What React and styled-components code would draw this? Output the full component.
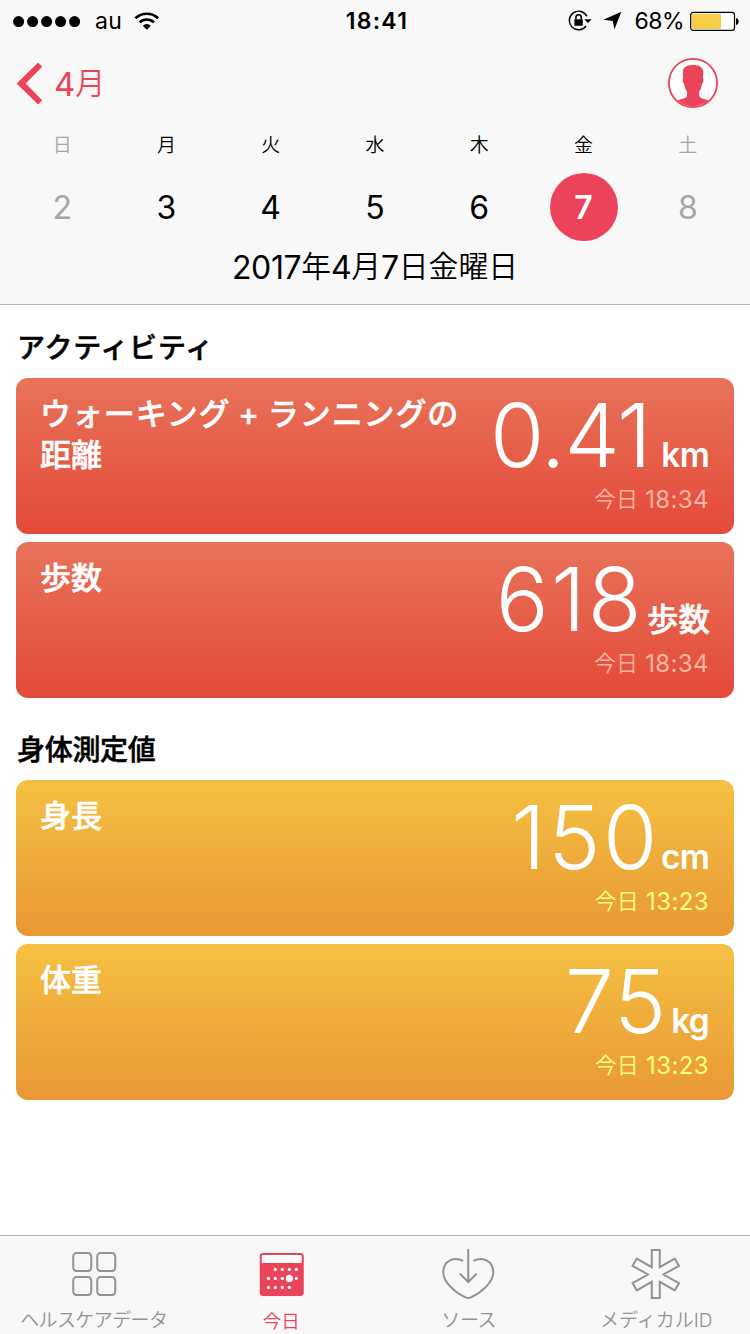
import React from "react";
import styled, { createGlobalStyle } from "styled-components";

const RED = "#eb445a";
const GREY = "#929292";

const GlobalStyle = createGlobalStyle`
  * { box-sizing: border-box; }
  html, body { margin: 0; padding: 0; background: #fff; }
  body {
    font-family: Inter, "Noto Sans CJK JP", sans-serif;
    color: #000;
  }
`;

const Screen = styled.div`
  width: 750px;
  height: 1334px;
  display: flex;
  flex-direction: column;
  background: #fff;
  overflow: hidden;
`;

const Kanji = styled.span`
  font-family: "Noto Sans CJK JP", sans-serif;
  font-weight: 350;
  font-size: ${(p) => p.$size}px;
  letter-spacing: 0;
  line-height: 1;
  vertical-align: ${(p) => p.$raise || 1}px;
`;

/* header */
const Header = styled.header`
  height: 305px;
  background: #f8f8f8;
  border-bottom: 1px solid #b2b2b2;
`;

const StatusBar = styled.div`
  height: 40px;
  padding: 0 11px 0 13px;
  display: grid;
  grid-template-columns: 1fr auto 1fr;
  align-items: center;
  font-size: 23px;
`;

const StatusSide = styled.div`
  display: flex;
  align-items: center;
  justify-content: ${(p) => (p.$end ? "flex-end" : "flex-start")};
  height: 40px;
`;

const StatusText = styled.span`
  padding-top: 1px;
  line-height: 40px;
`;

const Carrier = styled(StatusText)`
  margin: 0 12px 0 14px;
  letter-spacing: 0.3px;
`;

const Clock = styled(StatusText)`
  padding-left: 2px;
  font-weight: 600;
  letter-spacing: 1.3px;
`;

const Percent = styled(StatusText)`
  margin: 0 6px 0 12px;
  letter-spacing: -0.5px;
`;

const NavBar = styled.nav`
  height: 86px;
  padding: 0 32px 0 16px;
  display: flex;
  align-items: center;
  justify-content: space-between;
`;

const BackButton = styled.button`
  display: flex;
  align-items: center;
  gap: 11px;
  padding: 0;
  border: 0;
  background: none;
  color: ${RED};
  font-family: inherit;
  font-size: 33px;
`;

const BackLabel = styled.span`
  padding-top: 2px;
  line-height: 44px;
`;

const WeekRow = styled.div`
  display: grid;
  grid-template-columns: repeat(7, 1fr);
  justify-items: center;
  align-items: center;
  padding: 0 10px;
`;

const Weekday = styled.span`
  font-family: "Noto Sans CJK JP", sans-serif;
  font-size: 19px;
  font-weight: 350;
  line-height: 36px;
  color: ${(p) => (p.$dim ? "#a6a6a6" : "#000")};
`;

const Day = styled.span`
  width: 68px;
  height: 68px;
  margin-top: 11px;
  border-radius: 50%;
  text-align: center;
  line-height: 69px;
  font-size: 32px;
  font-weight: ${(p) => (p.$selected ? 600 : 400)};
  background: ${(p) => (p.$selected ? RED : "transparent")};
  color: ${(p) => (p.$selected ? "#fff" : p.$dim ? "#a6a6a6" : "#000")};
`;

const FullDate = styled.div`
  margin-top: 7px;
  text-align: center;
  font-size: 32px;
  line-height: 40px;
  letter-spacing: -0.4px;
`;

/* content */
const Content = styled.main`
  flex: 1;
  padding: 0 16px;
`;

const Section = styled.section`
  padding-top: ${(p) => p.$top}px;
`;

const SectionTitle = styled.h2`
  margin: 0 0 12px;
  padding-left: 1px;
  height: 40px;
  font-family: "Noto Sans CJK JP", sans-serif;
  font-size: 28px;
  line-height: 40px;
  font-weight: 500;
  -webkit-text-stroke: 0.5px currentColor;
  letter-spacing: ${(p) => p.$spacing}px;
`;

const tones = {
  red: { top: "#e87259", bottom: "#e44a38", time: "#ffb5a3" },
  yellow: { top: "#f5c042", bottom: "#e89835", time: "#ffff80" },
};

const Card = styled.article`
  height: 156px;
  margin-bottom: 8px;
  padding: 17px 25px 0 24px;
  border-radius: 12px;
  display: flex;
  justify-content: space-between;
  color: #fff;
  background: linear-gradient(${(p) => tones[p.$tone].top}, ${(p) => tones[p.$tone].bottom});
`;

const CardTitle = styled.h3`
  margin: -3px 0 0;
  font-family: "Noto Sans CJK JP", sans-serif;
  font-size: 31px;
  line-height: 40px;
  font-weight: 500;
  -webkit-text-stroke: 0.5px currentColor;
`;

const TitleLine = styled.div`
  height: 41px;
  letter-spacing: ${(p) => p.$spacing || 0}px;
`;

const Plus = styled.span`
  font-family: Inter, sans-serif;
  line-height: 1;
`;

const Reading = styled.div`
  display: flex;
  flex-direction: column;
  align-items: flex-end;
`;

const Value = styled.div`
  display: flex;
  align-items: baseline;
  gap: ${(p) => p.$gap}px;
  height: 80px;
  line-height: 80px;
`;

const Digits = styled.span`
  font-size: 88px;
  font-weight: 300;
  letter-spacing: ${(p) => p.$spacing}px;
`;

const LatinUnit = styled.span`
  font-size: 33.5px;
  font-weight: 600;
  letter-spacing: -0.8px;
`;

const KanjiUnit = styled.span`
  margin-right: -1px;
  font-size: 31.5px;
  font-weight: 500;
  -webkit-text-stroke: 0.5px currentColor;
`;

const Time = styled.div`
  margin-top: 5px;
  font-size: 24px;
  line-height: 40px;
  letter-spacing: 0.4px;
  color: ${(p) => tones[p.$tone].time};
`;

/* tab bar */
const TabBar = styled.footer`
  height: 99px;
  display: grid;
  grid-template-columns: repeat(4, 1fr);
  background: #f8f8f8;
  border-top: 1px solid #b2b2b2;
`;

const Tab = styled.button`
  display: flex;
  flex-direction: column;
  align-items: center;
  padding: 10px 0 0;
  border: 0;
  background: none;
  color: ${(p) => (p.$active ? RED : GREY)};
`;

const TabLabel = styled.span`
  margin-top: 7px;
  font-family: Inter, "Noto Sans CJK JP", sans-serif;
  font-size: ${(p) => p.$size || 19}px;
  font-weight: 350;
  line-height: 28px;
  letter-spacing: ${(p) => p.$spacing || 0}px;
  white-space: nowrap;
`;

const SignalDots = () => (
  <svg width="68" height="12" viewBox="0 -0.6 68 12">
    {[5.6, 19.6, 33.6, 47.6, 61.6].map((x) => (
      <circle key={x} cx={x} cy="6" r="5.5" />
    ))}
  </svg>
);

const WifiIcon = () => (
  <svg width="26" height="18" viewBox="0 0 26 18" fill="none" stroke="#000" strokeWidth="2.6">
    <path d="M1.4 6.3a16.4 16.4 0 0 1 22.8 0" />
    <path d="M5.6 10.4a10.5 10.5 0 0 1 14.4 0" />
    <path d="M12.8 17.8l-4-4.1a5.8 5.8 0 0 1 8 0z" fill="#000" stroke="none" />
  </svg>
);

const RotationLockIcon = () => (
  <svg width="24" height="22" viewBox="-0.5 0.8 24 22" fill="none" stroke="#000">
    <path d="M18.5 7.2A9.3 9.3 0 1 0 17.6 16.8" strokeWidth="1.4" />
    <path d="M15.8 10h7.4l-3.7 3.8z" fill="#000" stroke="none" />
    <rect x="5.9" y="10" width="8.4" height="6.6" rx="0.6" fill="#000" stroke="none" />
    <path d="M7.4 10.4V8.2a2.7 2.7 0 0 1 5.4 0V10.4" strokeWidth="1.5" />
  </svg>
);

const LocationIcon = () => (
  <svg width="30" height="19" viewBox="-11 -0.5 30 19">
    <path d="M18.3 0.2L11.4 17.9 9.8 9.4 0.4 8.2z" />
  </svg>
);

const BatteryIcon = () => (
  <svg width="49" height="20" viewBox="0 0 49 20">
    <rect x="0.7" y="1.4" width="43.8" height="18" rx="2.6" fill="#fff" stroke="#000" strokeWidth="1.2" />
    <rect x="2" y="2.8" width="29" height="15.2" rx="0.8" fill="#f7ce46" />
    <path d="M46 7c3.6.6 3.6 6.4 0 7z" />
  </svg>
);

const ChevronIcon = () => (
  <svg width="27" height="43" viewBox="0 -0.5 27 43" fill={RED}>
    <path d="M22.2 0.1L26.2 4.2 9.6 21 26.2 37.8 22.2 42 0.6 21z" />
  </svg>
);

const ProfileIcon = () => (
  <svg width="50" height="50" viewBox="0 0 50 50">
    <circle cx="25" cy="25" r="24.1" fill="#fff" stroke={RED} strokeWidth="1.8" />
    <path
      fill={RED}
      d="M25 7C31 7 34.6 9 35.3 13.4L35 20.2C35.9 21 35.5 24.6 34.2 25.5 33.6 29 32.6 31.6 31.1 33.8L31.3 38.3C32.6 40.6 37 41 40.5 42.6A24 24 0 0 1 9.5 42.6C13 41 17.6 40.6 18.9 38.3L19.1 33.8C17.4 31.6 16.6 29 16 25.5 14.6 24.6 14.2 21 15.1 20.2L14.8 13C15.6 9 19 7 25 7Z"
    />
  </svg>
);

const GridIcon = () => (
  <svg width="54" height="54" viewBox="-0.25 0 54 54" fill="none" stroke={GREY} strokeWidth="2">
    {[6, 30].map((y) =>
      [6, 30].map((x) => <rect key={`${x}-${y}`} x={x} y={y + 1} width="18" height="18" rx="3.4" />)
    )}
  </svg>
);

const dots = [
  [20.6, 23.4], [27.6, 23.4], [34.6, 23.4], [41.6, 23.4],
  [13.6, 32.4], [20.6, 32.4], [27.6, 32.4], [41.6, 32.4],
  [13.6, 41.4], [20.6, 41.4], [27.6, 41.4], [34.6, 41.4],
];

const CalendarIcon = () => (
  <svg width="54" height="54" viewBox="-0.75 0 54 54">
    <rect x="5" y="7" width="44" height="43" rx="3.4" fill={RED} />
    <path d="M7 17V10.4Q7 9 8.4 9H45.6Q47 9 47 10.4V17Z" fill="#fff" />
    {dots.map(([x, y]) => (
      <circle key={`${x}-${y}`} cx={x} cy={y} r="1.6" fill="#fff" />
    ))}
    <circle cx="34.6" cy="32.4" r="3.6" fill="#fff" />
  </svg>
);

const HeartIcon = () => (
  <svg width="54" height="54" viewBox="0.75 0 54 54" fill="none" stroke={GREY} strokeWidth="2">
    <path d="M21.8 14.8C13.8 11 2 13.6 2 26.2 2 36.4 14 46.6 24.4 51.4Q27 52.6 29.6 51.4C40 46.6 52 36.4 52 26.2 52 13.6 40.2 11 32.2 14.8" />
    <path d="M27 3V35.4M18.6 27.6L27 36l8.4-8.4" />
  </svg>
);

const AsteriskIcon = () => (
  <svg width="54" height="54" viewBox="0.25 0 54 54" fill="none" stroke={GREY} strokeWidth="2">
    <path d="M23 4h8v17.2l15-8.6 4.2 7.3L34.8 28.5l15.4 8.6-4.2 7.3-15-8.6V52h-8V35.8l-15 8.6-4.2-7.3L19.2 28.5 3.8 19.9 8 12.6l15 8.6z" />
  </svg>
);

const week = [
  ["日", 2, true], ["月", 3], ["火", 4], ["水", 5], ["木", 6], ["金", 7], ["土", 8, true],
];

function Measurement({ tone, title, value, unit, cjkUnit, time, gap, spacing }) {
  const Unit = cjkUnit ? KanjiUnit : LatinUnit;
  return (
    <Card $tone={tone}>
      <CardTitle>{title}</CardTitle>
      <Reading>
        <Value $gap={gap}>
          <Digits $spacing={spacing}>{value}</Digits>
          <Unit>{unit}</Unit>
        </Value>
        <Time $tone={tone}>
          <Kanji $size={22}>今日</Kanji> {time}
        </Time>
      </Reading>
    </Card>
  );
}

export default function App() {
  return (
    <>
      <GlobalStyle />
      <Screen>
        <Header>
          <StatusBar>
            <StatusSide>
              <SignalDots />
              <Carrier>au</Carrier>
              <WifiIcon />
            </StatusSide>
            <Clock>18:41</Clock>
            <StatusSide $end>
              <RotationLockIcon />
              <LocationIcon />
              <Percent>68%</Percent>
              <BatteryIcon />
            </StatusSide>
          </StatusBar>
          <NavBar>
            <BackButton>
              <ChevronIcon />
              <BackLabel>4<Kanji $size={30} $raise={2}>月</Kanji></BackLabel>
            </BackButton>
            <ProfileIcon />
          </NavBar>
          <WeekRow>
            {week.map(([name, , dim]) => (
              <Weekday key={name} $dim={dim}>{name}</Weekday>
            ))}
            {week.map(([, day, dim]) => (
              <Day key={day} $dim={dim} $selected={day === 7}>{day}</Day>
            ))}
          </WeekRow>
          <FullDate>
            2017<Kanji $size={29.8} $raise={2}>年</Kanji>4<Kanji $size={29.8} $raise={2}>月</Kanji>7
            <Kanji $size={29.8} $raise={2}>日金曜日</Kanji>
          </FullDate>
        </Header>
        <Content>
          <Section $top={21}>
            <SectionTitle $spacing={0.8}>アクティビティ</SectionTitle>
            <Measurement
              tone="red"
              title={
                <>
                  <TitleLine $spacing={0.9}>ウォーキング <Plus>+</Plus> ランニングの</TitleLine>
                  <TitleLine>距離</TitleLine>
                </>
              }
              value="0.41"
              unit="km"
              time="18:34"
              gap={11}
              spacing={-1.3}
            />
            <Measurement tone="red" title="歩数" value="618" unit="歩数" cjkUnit time="18:34" gap={3} spacing={2.3} />
          </Section>
          <Section $top={22}>
            <SectionTitle $spacing={-0.3}>身体測定値</SectionTitle>
            <Measurement tone="yellow" title="身長" value="150" unit="cm" time="13:23" gap={1} spacing={2.6} />
            <Measurement tone="yellow" title="体重" value="75" unit="kg" time="13:23" gap={4} spacing={1} />
          </Section>
        </Content>
        <TabBar>
          <Tab><GridIcon /><TabLabel $spacing={-0.6}>ヘルスケアデータ</TabLabel></Tab>
          <Tab $active><CalendarIcon /><TabLabel $size={18.5}>今日</TabLabel></Tab>
          <Tab><HeartIcon /><TabLabel $spacing={-0.4}>ソース</TabLabel></Tab>
          <Tab><AsteriskIcon /><TabLabel>メディカルID</TabLabel></Tab>
        </TabBar>
      </Screen>
    </>
  );
}
